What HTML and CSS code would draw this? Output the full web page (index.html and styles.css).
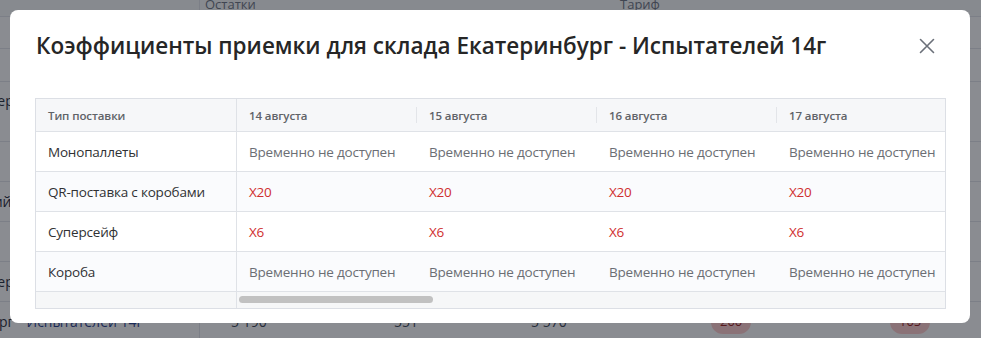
FILE: index.html
```html
<!DOCTYPE html>
<html lang="ru">
<head>
<meta charset="utf-8">
<title>Коэффициенты приемки</title>
<link rel="stylesheet" href="styles.css">
</head>
<body>
<div class="page">
  <div class="bg-row bg-head"><div class="bg-c1"></div><div class="bg-c2">Остатки</div><div class="bg-c3"></div><div class="bg-c4">Тариф</div></div>
  <div class="bg-row h32"><div class="bg-c1"></div></div>
  <div class="bg-row h33"><div class="bg-c1"></div></div>
  <div class="bg-row h60"><div class="bg-c1 two nm"><span class="w">Екатеринбург Пер<br>Ческая</span></div></div>
  <div class="bg-row"><div class="bg-c1"></div></div>
  <div class="bg-row"><div class="bg-c1 nm"><span class="w2">Казанский</span></div></div>
  <div class="bg-row"><div class="bg-c1"></div></div>
  <div class="bg-row"><div class="bg-c1 nm"><span class="w">Екатеринбург Пер</span></div></div>
  <div class="bg-row last"><div class="bg-c1 nm"><span class="w3">Екатеринбург</span> <span class="lnk">Испытателей 14г</span></div><div class="num n1">5 190</div><div class="num n2">551</div><div class="num n3">5 570</div><div class="pill p1">200</div><div class="pill p2">105</div></div>
</div>
<div class="overlay"></div>
<div class="modal">
  <div class="modal-head">
    <h2 class="title">Коэффициенты приемки для склада Екатеринбург - Испытателей 14г</h2>
    <button class="close" aria-label="Закрыть">
      <svg width="16" height="16" viewBox="0 0 16 16"><path d="M1.5 1.5 L14.5 14.5 M14.5 1.5 L1.5 14.5" stroke="#6b7079" stroke-width="1.6" fill="none" stroke-linecap="round"/></svg>
    </button>
  </div>
  <div class="tbl">
    <div class="tbl-inner">
      <div class="tr th">
        <div class="td first">Тип поставки</div>
        <div class="td"><span class="sep"></span>14 августа</div>
        <div class="td"><span class="sep"></span>15 августа</div>
        <div class="td"><span class="sep"></span>16 августа</div>
        <div class="td"><span class="sep"></span>17 августа</div>
        <div class="td"><span class="sep"></span>18 августа</div>
      </div>
      <div class="tr">
        <div class="td first">Монопаллеты</div>
        <div class="td na">Временно не доступен</div>
        <div class="td na">Временно не доступен</div>
        <div class="td na">Временно не доступен</div>
        <div class="td na">Временно не доступен</div>
        <div class="td na">Временно не доступен</div>
      </div>
      <div class="tr alt">
        <div class="td first">QR-поставка с коробами</div>
        <div class="td red">X20</div>
        <div class="td red">X20</div>
        <div class="td red">X20</div>
        <div class="td red">X20</div>
        <div class="td red">X20</div>
      </div>
      <div class="tr">
        <div class="td first">Суперсейф</div>
        <div class="td red">X6</div>
        <div class="td red">X6</div>
        <div class="td red">X6</div>
        <div class="td red">X6</div>
        <div class="td red">X6</div>
      </div>
      <div class="tr alt">
        <div class="td first">Короба</div>
        <div class="td na">Временно не доступен</div>
        <div class="td na">Временно не доступен</div>
        <div class="td na">Временно не доступен</div>
        <div class="td na">Временно не доступен</div>
        <div class="td na">Временно не доступен</div>
      </div>
      <div class="tr sb">
        <div class="td first"></div>
        <div class="track"><div class="thumb"></div></div>
      </div>
    </div>
  </div>
</div>
</body>
</html>
```
FILE: styles.css
```css
* { box-sizing: border-box; }
html, body { margin: 0; padding: 0; }
body {
  width: 981px;
  height: 338px;
  overflow: hidden;
  background: #ffffff;
  font-family: "Open Sans", "Noto Sans", sans-serif;
  color: #303133;
}
.page { width: 981px; }
.bg-row {
  display: flex;
  height: 40px;
  border-bottom: 1px solid #e2e5ea;
  font-size: 14px;
  color: #1f2937;
  align-items: center;
  position: relative;
}
.bg-head { height: 17px; align-items: flex-end; background: #f9fafb; font-size: 13px; color: #6b7280; }
.bg-head .bg-c2 { padding-left: 5px; width: 415px; line-height: 16px; margin-bottom: 4px; }
.bg-head .bg-c4 { line-height: 16px; margin-bottom: 4px; }
.bg-head .bg-c3 { width: 5px; }
.h32 { height: 32px; }
.h33 { height: 33px; }
.h60 { height: 60px; }
.bg-c1 {
  width: 200px;
  height: 100%;
  border-right: 1px solid #e2e5ea;
  display: flex;
  align-items: center;
  justify-content: flex-end;
  white-space: nowrap;
  overflow: hidden;
  flex: none;
}
.bg-head .bg-c1 { height: 17px; }
.two { line-height: 22px; }
.nm { justify-content: flex-start; }
.w { margin-left: -110px; }
.w2 { margin-left: -60px; }
.w3 { margin-left: -80px; }
.lnk { color: #1e3a8a; margin-left: 13px; }
.num { position: absolute; top: 10px; font-size: 14px; color: #374151; }
.n1 { left: 231px; }
.n2 { left: 394px; }
.n3 { left: 531px; }
.pill { position: absolute; top: 8px; height: 24px; padding: 2px 9px; border-radius: 12px; background: #fecaca; color: #991b1b; font-size: 13px; }
.p1 { left: 711px; }
.p2 { left: 890px; }

.overlay {
  position: fixed;
  inset: 0;
  background: rgba(22, 26, 36, 0.5);
}
.modal {
  position: fixed;
  left: 10px;
  top: 10px;
  width: 960px;
  height: 313px;
  background: #ffffff;
  border-radius: 8px;
  padding: 19px 24px 0 25px;
}
.modal-head {
  display: flex;
  align-items: center;
  justify-content: space-between;
  height: 33px;
  margin-bottom: 36px;
}
.title {
  margin: 0 0 0 1px;
  font-size: 22.5px;
  line-height: 32px;
  font-weight: 600;
  color: #262626;
}
.close {
  border: 0;
  background: transparent;
  padding: 0;
  width: 16px;
  height: 16px;
  margin-right: 11px;
  display: flex;
}
.tbl {
  width: 911px;
  border: 1px solid #dcdfe5;
  overflow: hidden;
}
.tbl-inner { width: 1109px; }
.tr {
  display: flex;
  height: 40px;
  border-bottom: 1px solid #dfe2e7;
  background: #ffffff;
}
.tr.alt { background: #fafbfd; }
.tr.th { height: 33px; background: #f6f7f9; }
.td {
  width: 180px;
  flex: none;
  padding: 0 12px;
  display: flex;
  align-items: center;
  font-size: 13.5px;
  letter-spacing: -0.2px;
  white-space: nowrap;
  position: relative;
}
.td.first {
  width: 201px;
  border-right: 1px solid #dfe2e7;
  color: #303133;
}
.th .td { font-size: 11.5px; font-weight: 600; color: #5f6368; letter-spacing: -0.1px; }
.sep {
  position: absolute;
  left: -1px;
  top: 8px;
  width: 1px;
  height: 16px;
  background: #e3e5e9;
}
.th .td:nth-child(2) .sep { display: none; }
.na { color: #6b6e74; }
.red { color: #cf2f2f; }
.tr.sb { height: 16px; border-bottom: 0; background: #f6f7f8; }
.sb .td.first { background: #f6f7f8; }
.track { flex: none; width: 900px; position: relative; }
.thumb {
  position: absolute;
  left: 2px;
  top: 4px;
  width: 194px;
  height: 7px;
  border-radius: 4px;
  background: #c1c1c1;
}
```
